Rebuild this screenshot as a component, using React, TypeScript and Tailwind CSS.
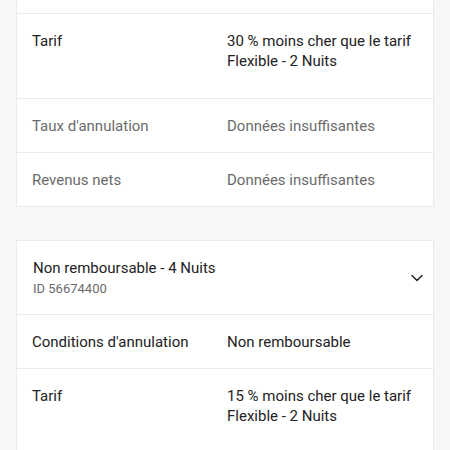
import { ChevronDown } from 'lucide-react';

type Row = { label: string; value: string[]; muted?: boolean; tall?: boolean };

const firstCard: Row[] = [
  { label: 'Tarif', value: ['30 % moins cher que le tarif', 'Flexible - 2 Nuits'], tall: true },
  { label: "Taux d'annulation", value: ['Données insuffisantes'], muted: true },
  { label: 'Revenus nets', value: ['Données insuffisantes'], muted: true },
];

const secondCard: Row[] = [
  { label: "Conditions d'annulation", value: ['Non remboursable'] },
  { label: 'Tarif', value: ['15 % moins cher que le tarif', 'Flexible - 2 Nuits'], tall: true },
];

function DetailRow({ row }: { row: Row }) {
  const color = row.muted ? 'text-[#6b6b6b]' : 'text-[#222222]';
  return (
    <div className={`flex border-t border-[#ebebeb] pl-[15px] pr-4 pt-[17px] ${row.tall ? 'pb-[27px]' : 'pb-[16px]'} ${color}`}>
      <div className="w-[195px] shrink-0 text-[15px] leading-5">{row.label}</div>
      <div className="text-[15px] leading-5">
        {row.value.map((line) => (
          <div key={line}>{line}</div>
        ))}
      </div>
    </div>
  );
}

export default function App() {
  return (
    <div className="min-h-screen bg-[#f7f7f7] px-4 pb-10 font-['Roboto',sans-serif]">
      <div className="border-x border-b border-[#ebebeb] bg-white">
        <div className="h-[13px]" />
        {firstCard.map((row) => (
          <DetailRow key={row.label} row={row} />
        ))}
      </div>

      <div className="mt-[33px] border border-[#ebebeb] bg-white">
        <div className="flex items-center justify-between pl-[16px] pr-[6px] pt-[17px] pb-[16px]">
          <div>
            <div className="text-[15px] leading-5 text-[#222222]">Non remboursable - 4 Nuits</div>
            <div className="mt-[2px] text-[13px] leading-[18px] text-[#6b6b6b]">ID 56674400</div>
          </div>
          <ChevronDown className="h-5 w-5 text-[#222222]" strokeWidth={1.75} />
        </div>
        {secondCard.map((row) => (
          <DetailRow key={row.label + row.value[0]} row={row} />
        ))}
      </div>
    </div>
  );
}
